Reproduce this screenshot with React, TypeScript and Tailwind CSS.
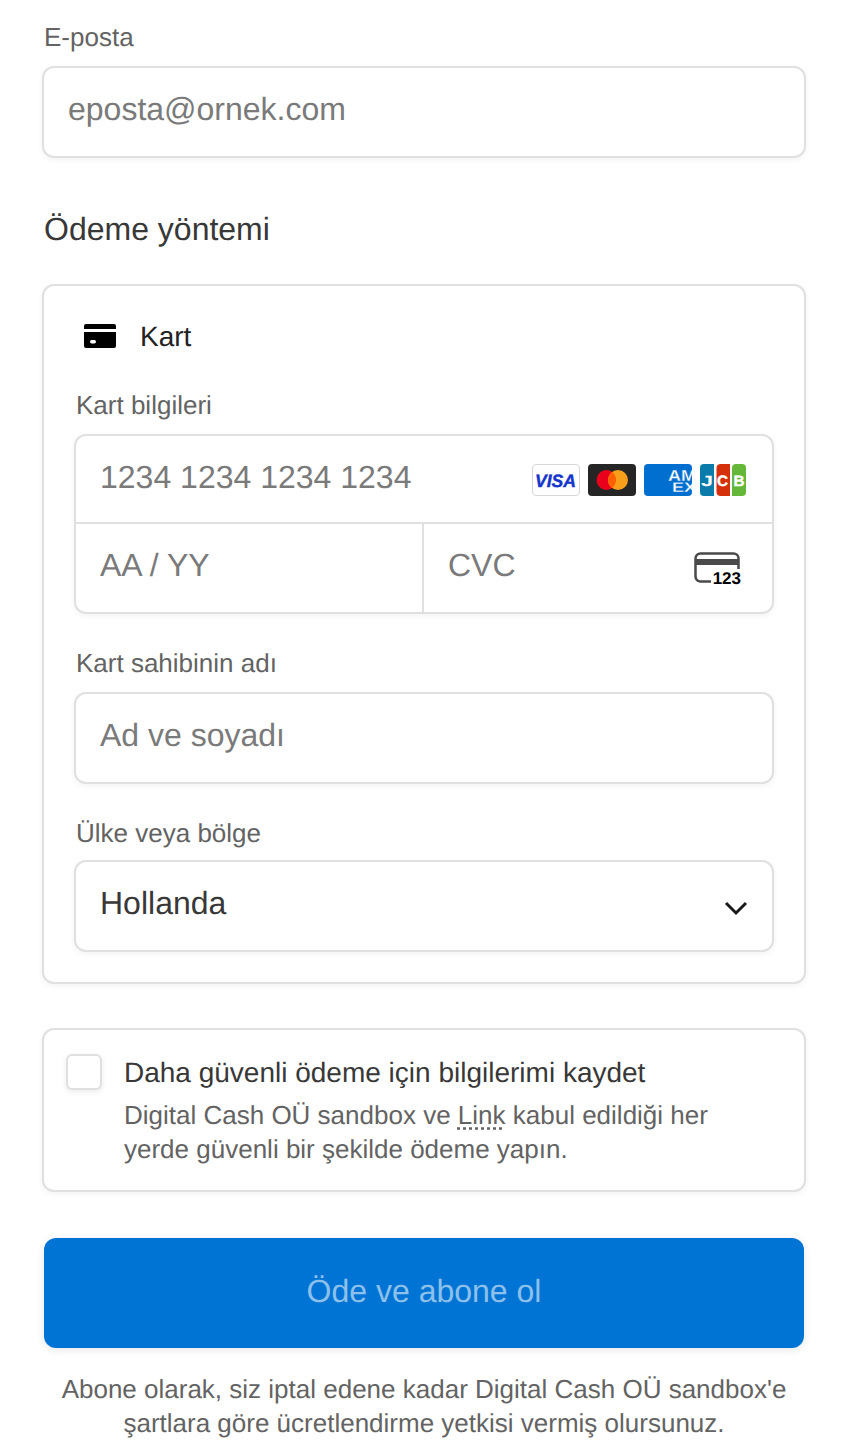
const field = 'border-2 border-[#e0e0e0] bg-white shadow-[0_2px_6px_rgba(0,0,0,0.05)]';

function Label({ children, className = '' }: { children: React.ReactNode; className?: string }) {
  return <div className={`text-[26px] leading-[32px] text-[#636363] ${className}`}>{children}</div>;
}

function CardGlyph() {
  return (
    <svg width="32" height="24" viewBox="0 0 32 24" className="shrink-0">
      <path d="M2 0h28a2 2 0 0 1 2 2v3H0V2a2 2 0 0 1 2-2z" fill="#000" />
      <path d="M0 8h32v14a2 2 0 0 1-2 2H2a2 2 0 0 1-2-2z" fill="#000" />
      <rect x="6" y="16" width="6" height="3.5" rx="1.7" fill="#fff" />
    </svg>
  );
}

function Brands() {
  return (
    <div className="flex items-center gap-2">
      <svg width="48" height="32" viewBox="0 0 48 32">
        <rect x="0.5" y="0.5" width="47" height="31" rx="3.5" fill="#fff" stroke="#d6d6d6" />
        <text x="3" y="23" textLength="41" lengthAdjust="spacingAndGlyphs" fontFamily="Liberation Sans" fontWeight="700" fontStyle="italic" fontSize="18" fill="#1434cb" stroke="#1434cb" strokeWidth="0.4">VISA</text>
      </svg>
      <svg width="48" height="32" viewBox="0 0 48 32">
        <rect width="48" height="32" rx="4" fill="#252525" />
        <circle cx="18.5" cy="16" r="10" fill="#eb001b" />
        <circle cx="30" cy="16" r="10" fill="#f79e1b" />
        <path d="M24 8a10 10 0 0 1 0 16a10 10 0 0 1 0-16z" fill="#ff5f00" />
      </svg>
      <svg width="48" height="32" viewBox="0 0 48 32">
        <rect width="48" height="32" rx="4" fill="#006fcf" />
        <text x="24" y="17" textLength="28" lengthAdjust="spacingAndGlyphs" fontFamily="Liberation Sans" fontWeight="700" fontSize="16" fill="#fff" stroke="#006fcf" strokeWidth="0.3">AM</text>
        <text x="28" y="28" textLength="24" lengthAdjust="spacingAndGlyphs" fontFamily="Liberation Sans" fontWeight="700" fontSize="14" fill="#fff" stroke="#006fcf" strokeWidth="0.3">EX</text>
      </svg>
      <svg width="46" height="32" viewBox="0 0 46 32">
        <path d="M4 0h10v32H4a4 4 0 0 1-4-4V4a4 4 0 0 1 4-4z" fill="#0a7bab" />
        <path d="M20 0h10v32H20a4 4 0 0 1-3.500-4V4a4 4 0 0 1 3.500-4z" fill="#d4300a" />
        <path d="M36 0h6a4 4 0 0 1 4 4v24a4 4 0 0 1-4 4H32V4a4 4 0 0 1 4-4z" fill="#65b73a" />
        <text x="1" y="22" textLength="12" lengthAdjust="spacingAndGlyphs" fontFamily="Liberation Sans" fontWeight="700" fontSize="15" fill="#fff">J</text>
        <text x="17" y="22" textLength="11" lengthAdjust="spacingAndGlyphs" fontFamily="Liberation Sans" fontWeight="700" fontSize="15" fill="#fff" stroke="#fff" strokeWidth="0.4">C</text>
        <text x="33.500" y="22" textLength="11" lengthAdjust="spacingAndGlyphs" fontFamily="Liberation Sans" fontWeight="700" fontSize="15" fill="#fff" stroke="#fff" strokeWidth="0.4">B</text>
      </svg>
    </div>
  );
}

function CvcIcon() {
  return (
    <div className="relative h-[34px] w-[48px]">
      <svg width="48" height="34" viewBox="0 0 48 34" className="absolute left-0 top-0">
        <rect x="1.5" y="1.5" width="43" height="28" rx="5" fill="none" stroke="#4a4a4a" strokeWidth="2.5" />
        <rect x="1" y="7" width="44" height="6" fill="#4a4a4a" />
      </svg>
      <span className="absolute bottom-[-3px] right-[1px] bg-white pl-[2px] text-[17px] font-bold leading-[20px] text-black">123</span>
    </div>
  );
}

export default function App() {
  return (
    <div className="h-[1440px] w-[848px] overflow-hidden bg-white px-[42px] pt-[21px] font-['Liberation_Sans',Arial,sans-serif] [text-rendering:geometricPrecision]">
      <Label className="pl-[2px]">E-posta</Label>
      <div className={`mt-[13px] flex h-[92px] items-center rounded-[12px] px-[24px] pb-[6px] text-[32px] text-[#7a7a7a] ${field}`}>
        eposta@ornek.com
      </div>

      <h2 className="mt-[51px] pl-[2px] text-[32px] font-normal leading-[40px] text-[#383838]">Ödeme yöntemi</h2>

      <div className={`mt-[35px] h-[700px] rounded-[12px] px-[30px] ${field}`}>
        <div className="flex h-[69px] items-end gap-[24px] pl-[10px]">
          <div className="pb-[7px]"><CardGlyph /></div>
          <span className="text-[28px] leading-[36px] text-[#222222]">Kart</span>
        </div>

        <Label className="mt-[34px] pl-[2px]">Kart bilgileri</Label>
        <div className={`mt-[13px] rounded-[12px] ${field}`}>
          <div className="flex h-[86px] items-center justify-between pb-[4px] pl-[24px] pr-[26px] text-[32px] text-[#7a7a7a]">
            <span>1234 1234 1234 1234</span>
            <div className="pt-[6px]"><Brands /></div>
          </div>
          <div className="flex h-[90px] border-t-2 border-[#e0e0e0]">
            <div className="flex w-[348px] items-center border-r-2 border-[#e0e0e0] pb-[6px] pl-[24px] text-[32px] text-[#7a7a7a]">AA / YY</div>
            <div className="flex flex-1 items-center justify-between pb-[6px] pl-[24px] pr-[30px] text-[32px] text-[#7a7a7a]">
              <span>CVC</span>
              <div className="pt-[8px]"><CvcIcon /></div>
            </div>
          </div>
        </div>

        <Label className="mt-[33px] pl-[2px]">Kart sahibinin adı</Label>
        <div className={`mt-[13px] flex h-[92px] items-center rounded-[12px] px-[24px] pb-[6px] text-[32px] text-[#7a7a7a] ${field}`}>
          Ad ve soyadı
        </div>

        <Label className="mt-[33px] pl-[2px]">Ülke veya bölge</Label>
        <div className={`mt-[11px] flex h-[92px] items-center justify-between rounded-[12px] pl-[24px] pr-[24px] pb-[6px] text-[32px] text-[#383838] ${field}`}>
          <span>Hollanda</span>
          <svg width="24" height="16" viewBox="0 0 24 16" className="mt-[10px]">
            <path d="M2 3l10 10L22 3" fill="none" stroke="#1a1a1a" strokeWidth="3" />
          </svg>
        </div>
      </div>

      <div className={`mt-[44px] flex h-[164px] gap-[22px] rounded-[12px] pl-[22px] pt-[24px] ${field}`}>
        <div className="h-[36px] w-[36px] shrink-0 rounded-[6px] border-2 border-[#e0e0e0] bg-white shadow-[0_2px_6px_rgba(0,0,0,0.08)]" />
        <div className="mt-[1px]">
          <div className="text-[28px] leading-[36px] text-[#383838]">Daha güvenli ödeme için bilgilerimi kaydet</div>
          <div className="mt-[7px] text-[26px] leading-[34px] text-[#636363]">
            Digital Cash OÜ sandbox ve{' '}
            <span className="underline decoration-dotted decoration-[#636363] underline-offset-[3px]">Link</span>{' '}
            kabul edildiği her
            <br />
            yerde güvenli bir şekilde ödeme yapın.
          </div>
        </div>
      </div>

      <div className="mx-[2px] mt-[46px] flex h-[110px] items-center justify-center rounded-[12px] bg-[#0074d4] pb-[4px] text-[32px] text-[#8dc0ea] shadow-[0_2px_8px_rgba(0,0,0,0.1)]">
        Öde ve abone ol
      </div>

      <div className="mt-[24px] text-center text-[26px] leading-[34px] text-[#636363]">
        Abone olarak, siz iptal edene kadar Digital Cash OÜ sandbox'e
        <br />
        şartlara göre ücretlendirme yetkisi vermiş olursunuz.
      </div>
    </div>
  );
}
